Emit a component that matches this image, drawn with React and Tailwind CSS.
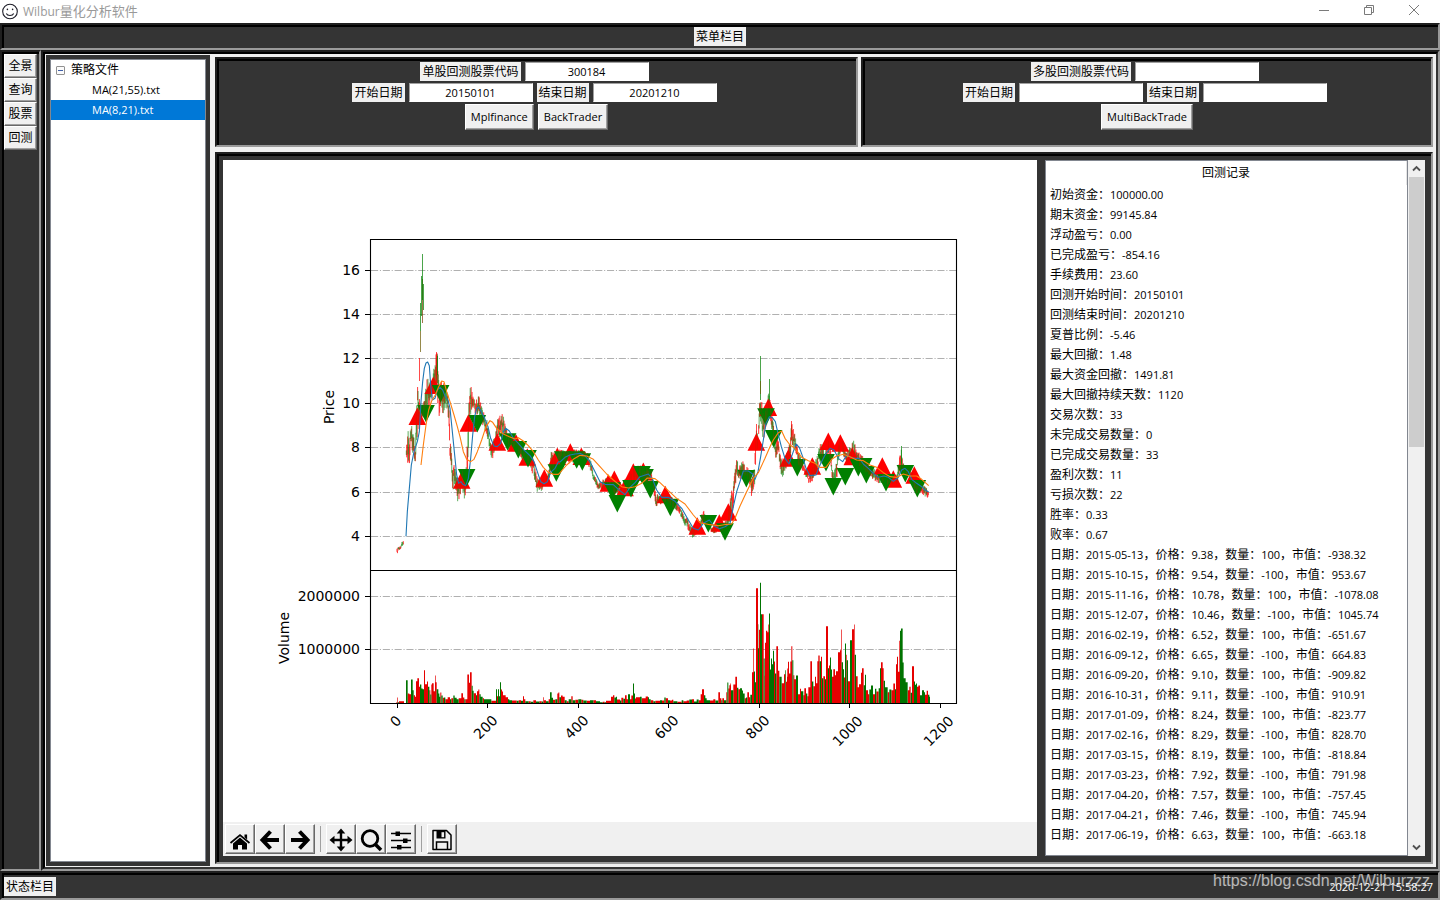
import React from "react";

/* ---------- shared styling ---------- */

const SUNKEN =
  "border-2 border-t-[#1f1f1f] border-l-[#1f1f1f] border-r-[#9a9a9a] border-b-[#9a9a9a] bg-[#343434] shadow-[inset_2px_2px_0_#000]";
const RAISED =
  "border border-t-white border-l-white border-r-[#696969] border-b-[#696969] bg-[#f0f0f0] shadow-[inset_-1px_-1px_0_#a0a0a0]";

/* Ideographs are set one pixel larger than the Latin text around them. */
function Mixed({ text }) {
  return text
    .split(/([\u3000-\u9fff\uff00-\uffef]+)/)
    .filter(Boolean)
    .map((part, i) => (
      <span key={i} className={/[\u3000-\uffef]/.test(part) ? "text-[12px]" : ""}>
        {part}
      </span>
    ));
}

/* ---------- title, menu and status bars ---------- */

function TitleBar() {
  return (
    <header className="flex h-[23px] items-center justify-between bg-white pl-[2px] pr-[19px]">
      <div className="flex items-center gap-[5px]">
        <svg width="16" height="18" viewBox="0 0 16 18" fill="none" stroke="#1d1d28">
          <circle cx="8" cy="8.5" r="7.3" strokeWidth="1.1" />
          <path d="M4.3 10.6c1.2 2.6 6.200 2.600 7.400 0" strokeWidth="1.1" />
          <circle cx="5.400" cy="6.400" r="0.800" fill="#1d1d28" stroke="none" />
          <circle cx="10.600" cy="6.400" r="0.800" fill="#1d1d28" stroke="none" />
        </svg>
        <h1 className="text-[12px] leading-[20px] text-[#999999]">
          Wilbur<span className="text-[13px]">量化分析软件</span>
        </h1>
      </div>
      <div className="flex h-full items-start gap-[31px] pt-[3px] text-[#7a7a7a]">
        <button aria-label="最小化" className="flex h-[14px] w-[14px] items-center justify-center">
          <svg width="12" height="12" viewBox="0 0 12 12" stroke="currentColor">
            <path d="M1 6.5h10" />
          </svg>
        </button>
        <button aria-label="还原" className="flex h-[14px] w-[14px] items-center justify-center">
          <svg width="12" height="12" viewBox="0 0 12 12" fill="none" stroke="currentColor">
            <path d="M1.500 3.500h7v7h-7zM3.500 3.500v-2h7v7h-2" />
          </svg>
        </button>
        <button aria-label="关闭" className="flex h-[14px] w-[14px] items-center justify-center">
          <svg width="12" height="12" viewBox="0 0 12 12" stroke="currentColor">
            <path d="M1 1l10 10M11 1L1 11" />
          </svg>
        </button>
      </div>
    </header>
  );
}

function Tag({ children, htmlFor }) {
  const cls = "block h-[19px] bg-[#f0f0f0] px-[2px] text-[12px] leading-[20px] text-black";
  return htmlFor ? (
    <label htmlFor={htmlFor} className={cls}>{children}</label>
  ) : (
    <span className={cls}>{children}</span>
  );
}

function StatusBar() {
  return (
    <footer className={`relative flex h-[29px] items-center justify-between px-[2px] pt-[2px] ${SUNKEN}`}>
      <Tag>状态栏目</Tag>
      <time className="pr-[3px] text-[11px] leading-[16px] text-white">2020-12-21 15:58:27</time>
      <span className="absolute right-[8px] -top-[1px] font-['Liberation_Sans',sans-serif] text-[16px] leading-[18px] text-white/65">
        https://blog.csdn.net/Wilburzzz
      </span>
    </footer>
  );
}

/* ---------- left column ---------- */

function SideNav() {
  return (
    <nav className={`w-[41px] py-[2px] pl-[2px] pr-[2px] ${SUNKEN}`}>
      {["全景", "查询", "股票", "回测"].map((name) => (
        <button key={name} className={`block h-[24px] w-full text-[12px] leading-[22px] text-black ${RAISED}`}>
          {name}
        </button>
      ))}
    </nav>
  );
}

function StrategyTree() {
  return (
    <aside className="flex w-[164px] bg-[#343434] p-[4px]">
      <ul className="flex-1 border border-[#828790] bg-white text-[11px] leading-[20px] text-black">
        <li>
          <div className="flex h-[20px] items-center gap-[6px] pl-[5px]">
            <svg width="9" height="9" viewBox="0 0 9 9">
              <rect x="0.500" y="0.500" width="8" height="8" rx="0.500" fill="#fbfbfb" stroke="#919191" />
              <path d="M2 4.500h5" stroke="#3f5fa8" />
            </svg>
            <span className="text-[12px] leading-[20px]">策略文件</span>
          </div>
          <ul>
            <li className="pl-[41px]">MA(21,55).txt</li>
            <li className="bg-[#0078d7] pl-[41px] text-white">MA(8,21).txt</li>
          </ul>
        </li>
      </ul>
    </aside>
  );
}

/* ---------- query panels ---------- */

function Field({ id, label, value }) {
  return (
    <div className="flex items-center gap-[4px]">
      <Tag htmlFor={id}>{label}</Tag>
      <input
        id={id}
        defaultValue={value}
        className="h-[19px] w-[124px] border border-t-[#a0a0a0] border-l-[#a0a0a0] border-r-white border-b-white bg-white text-center text-[11px] leading-[17px] text-black outline-none"
      />
    </div>
  );
}

function QueryPanel({ prefix, codeLabel, code, start, end, actions, className }) {
  return (
    <form
      onSubmit={(e) => e.preventDefault()}
      className={`flex h-[90px] flex-col items-center gap-[2px] pt-[3px] ${SUNKEN} ${className}`}
    >
      <div className="flex pr-[4px]">
        <Field id={`${prefix}-code`} label={codeLabel} value={code} />
      </div>
      <div className="flex gap-[4px] pr-[4px]">
        <Field id={`${prefix}-start`} label="开始日期" value={start} />
        <Field id={`${prefix}-end`} label="结束日期" value={end} />
      </div>
      <div className="flex gap-[4px]">
        {actions.map((a) => (
          <button key={a} type="button" className={`h-[26px] px-[5px] text-[11px] leading-[22px] text-black ${RAISED}`}>
            {a}
          </button>
        ))}
      </div>
    </form>
  );
}

/* ---------- chart data ---------- */

/* Series are recorded in thirds of a pixel from a section's origin. */
const at = (ox, oy, rows) => rows.map(([x, ...ys]) => [ox + x / 3, ...ys.map((y) => oy + y / 3)]);

const FAST_MA = [
  ...at(370, 235, [[108,904],[112,830],[118,760],[124,690],[132,650],[142,620],[148,590],[153,500],[158,440],[163,400],[168,384],[173,381],[178,392],[182,450],[187,495],[195,490],[202,465],[210,457],[218,465],[226,485],[234,495],[240,520],[247,590],[254,660],[260,720],[266,745],[273,740],[278,748],[287,752],[295,730],[302,670],[308,600],[314,545],[320,520],[326,516],[334,530],[344,550],[354,575],[362,610],[372,633],[382,635],[392,625],[400,590],[408,580],[418,588],[430,610],[445,625],[462,645],[480,662],[492,680],[502,710],[512,740],[522,746],[532,740],[542,712],[555,700],[565,680]]),
  ...at(560, 400, [[0,186],[15,172],[30,165],[45,162],[60,160],[75,168],[90,185],[105,215],[120,245],[135,253],[160,254],[175,268],[195,284],[210,262],[225,248],[240,230],[265,222],[278,238],[290,270],[305,292],[325,292],[345,304],[365,325],[385,360],[400,385],[415,390],[430,370],[448,360],[462,378],[478,386],[495,380],[510,370],[520,320],[530,275]]),
  ...at(740, 340, [[0,425],[10,393],[25,393],[38,402],[45,418],[54,395],[62,350],[70,300],[78,250],[88,230],[97,233],[106,245],[114,280],[124,320],[135,355],[147,372],[158,340],[168,312],[178,322],[188,350],[198,385],[210,407],[228,405],[240,375],[255,345],[270,325],[282,330],[295,355],[308,365],[320,345],[332,352],[345,355],[358,355],[370,372],[385,385],[400,400],[415,412],[432,408],[445,412],[460,424],[475,412],[485,390],[495,385],[505,395],[515,418],[530,430],[545,440],[555,450],[566,456]]),
];

const SLOW_MA = [
  ...at(370, 235, [[153,690],[160,630],[168,570],[176,525],[186,495],[196,480],[206,455],[215,438],[222,440],[230,470],[240,500],[252,540],[262,575],[270,605],[280,650],[290,673],[302,680],[312,673],[322,650],[335,615],[348,575],[360,557],[368,562],[380,580],[400,597],[418,605],[435,612],[445,608],[460,618],[475,632],[490,650],[505,675],[520,697],[535,712],[550,718],[565,718]]),
  ...at(560, 400, [[0,218],[20,195],[40,178],[60,166],[80,168],[100,178],[120,200],[140,222],[160,240],[185,260],[205,264],[225,260],[245,250],[262,234],[285,236],[300,248],[325,272],[350,295],[375,312],[400,345],[420,368],[450,374],[475,377],[500,373],[515,372],[525,355]]),
  ...at(740, 340, [[0,498],[20,455],[40,415],[55,398],[75,355],[90,320],[100,300],[115,278],[125,273],[135,295],[150,315],[165,325],[185,352],[205,362],[225,370],[240,382],[258,382],[275,358],[290,348],[310,343],[330,350],[350,360],[370,362],[390,375],[410,382],[430,398],[450,410],[470,412],[490,402],[510,408],[530,408],[545,418],[566,437]]),
];

/* x centre and base line of every marker */
const BUYS = [
  ...at(370, 235, [[142,570],[190,477],[275,761],[295,590],[382,647],[438,650],[472,692],[523,755],[562,690]]),
  ...at(560, 400, [[31,182],[64,195],[145,275],[163,264],[195,289],[220,242],[250,240],[316,310],[412,404],[478,395],[505,362]]),
  ...at(740, 340, [[49,332],[85,228],[145,380],[217,404],[265,330],[301,335],[337,376],[427,404],[460,443],[523,431]]),
];
const SELLS = [
  ...at(370, 235, [[168,510],[212,450],[290,702],[322,540],[413,595],[445,618],[474,645],[559,688]]),
  ...at(560, 400, [[8,154],[50,154],[67,160],[157,247],[172,285],[213,240],[246,198],[255,207],[271,243],[331,296],[445,345],[495,370],[559,210]]),
  ...at(740, 340, [[78,205],[101,270],[172,357],[258,342],[280,414],[316,384],[355,357],[371,354],[379,378],[438,402],[496,375],[532,420]]),
];

/* high and low of the traded range along x */
const RANGES = [
  at(370, 235, [[81,932,962],[84,935,950],[90,933,945],[96,920,938],[101,917,928]]),
  [
    ...at(370, 235, [[109,640,660],[113,580,688],[118,610,688],[124,560,640],[130,590,660],[136,620,685],[140,500,650],[143,450,580],[147,450,600],[150,500,560],[157,510,560],[165,480,540],[172,415,520],[180,450,520],[188,410,480],[195,385,450],[199,350,450],[203,360,540],[207,450,550],[212,430,520],[220,440,540],[228,440,520],[236,490,560],[240,600,670],[247,690,770],[255,690,750],[262,740,805],[268,720,790],[276,690,760],[286,740,808],[292,600,720],[297,480,600],[302,445,550],[308,470,520],[316,500,540],[326,480,540],[338,520,570],[350,550,600],[358,600,640],[366,630,680],[376,590,640],[384,545,620],[392,535,610],[397,533,600],[405,560,610],[415,600,640],[440,600,650],[460,640,680],[480,660,695],[490,670,730],[500,720,770],[508,735,772],[518,730,765],[530,720,750],[538,700,740],[543,640,700],[555,660,720],[565,635,700]]),
    ...at(560, 400, [[0,145,190],[30,150,190],[60,145,180],[85,160,195],[95,190,225],[105,230,255],[115,245,270],[135,235,270],[150,230,275],[170,250,290],[200,250,290],[215,205,250],[235,190,240],[260,200,250],[275,210,260],[283,250,290],[288,275,322],[300,285,315],[320,275,310],[345,295,330],[360,320,345],[375,350,380],[385,350,390],[396,385,415],[415,375,400],[430,330,370],[440,350,375],[460,385,402],[480,370,395],[500,360,390],[513,280,370],[520,250,320],[530,165,225]]),
    ...at(740, 340, [[0,375,425],[8,355,410],[18,380,420],[28,380,430],[36,400,480],[43,385,450],[49,255,340],[55,290,330],[58,180,260],[62,170,250],[66,180,290],[74,210,300],[82,160,260],[86,150,220],[95,190,270],[102,270,330],[108,280,360],[116,300,340],[122,340,410],[132,360,410],[142,330,380],[150,300,360],[154,245,320],[160,265,330],[168,280,340],[176,330,380],[190,370,395],[200,385,420],[210,390,440],[222,375,415],[235,330,390],[243,305,370],[255,330,370],[268,280,350],[276,370,420],[280,400,440],[290,360,420],[300,280,340],[308,300,345],[318,320,370],[330,320,370],[342,300,350],[350,330,370],[370,350,390],[390,380,410],[410,390,430],[430,400,430],[450,410,440],[470,400,435],[480,340,400],[484,320,390],[490,370,400],[505,385,415],[515,390,430],[530,420,460],[545,430,460],[555,440,470],[566,450,475]]),
  ],
];

/* isolated tall candles: x, high, low, colour */
const SPIKES = [
  [419.500, 358, 381, "#f00"], [420.500, 303, 331, "green"], [420.500, 331, 352, "#6b5a00"],
  [421.500, 276, 316, "green"], [422.500, 279, 323, "#7a3a00"], [422.500, 254, 300, "green"],
  [423.500, 284, 310, "green"], [436.500, 352, 385, "#f00"], [437.500, 356, 375, "green"],
  [760.500, 356, 400, "green"], [760.500, 381, 394, "#6b5a00"], [769.500, 379, 400, "green"],
  [756.500, 424, 450, "#f00"], [901.500, 446, 470, "green"], [791.500, 421, 440, "#f00"],
];

/* each volume step runs to the x of the next one; y is measured above a base of 430 */
const VOLUME = [
  [260, "409,426r 411,412r 413,426g 417,423r 432,429g 438,360g 443,400r 448,402r 453,358g 458,390g 461,405r 465,410r 468,363r 472,354r 477,380r 480,373g 484,385g 488,387g 492,330r 495,372r 501,364r 504,380g 508,390r 511,403g 514,373r 516,369r 521,393r 525,346r 527,366r 530,387g 535,400g 538,410g 541,397r 544,406g 548,413r 552,412g 556,417r 563,411r 570,417g 574,414r 580,406g 584,413g 590,417g 596,414r 604,399r 609,412r 613,417g 616,417r 622,343r 627,368r 630,336r 635,377g 638,392g 641,399r 648,405g 651,393r 655,388r 658,402g 662,410g 668,414r 672,417g 694,422r 708,387g 711,408r 714,387g 717,408g 720,366g 723,388r 726,394r 729,405r 737,411r 744,417g 748,420g 756,421r 770,422g 776,420r 783,422g 789,408r 792,417r 796,423g 806,423r 812,425g 820,420r 828,424g 838,423r 845,424g 850,411r 852,420r 858,423g 866,417r 870,396g 875,413g 879,419r 886,417g 892,400r 895,397r 898,411g 903,406r 908,410r 914,420g 920,423r 926,417g 934,408r 938,420g 946,419r 955,417g 964,419r 970,421g 980,422r 990,420g 1000,420r 1008,423g"],
  [600, "0,426g 8,425r 14,426g 18,422r 33,410r 39,405r 43,412g 48,410g 51,418r 60,421g 64,413r 70,416g 75,405r 80,417r 84,402g 90,417r 94,406r 99,370g 102,400g 105,415r 108,411r 120,410g 125,414r 137,409r 144,411g 147,417g 152,420r 160,423g 166,422r 180,420g 186,421r 193,412g 197,414r 204,420g 210,421r 216,419r 220,423g 232,425r 245,420g 250,423r 260,421r 268,418g 276,417r 282,424g 290,418g 296,420r 302,402r 306,387r 312,405g 316,414g 320,420g 330,421r 340,417r 346,421g 355,396r 360,414r 364,420g 367,414r 372,420g 379,396r 382,367g 385,385r 388,375r 391,370r 393,390g 400,373r 406,350r 411,383g 415,387r 420,384g 426,391g 429,400g 434,414r 438,412g 442,396r 447,411r 451,404g 456,336r 460,265r 462,334g 465,366g 468,84r 474,192g 475,264g 477,209r 480,68g 483,162g 486,162r 491,295g 494,347r 495,248r 498,212r 502,216r 505,193r 507,160g 510,328g 513,295g 516,312g 519,272g 522,304r 525,340g 529,258r 534,332r 538,350g 545,369r 552,342r 556,330g 558,365r 561,350r 562,325r 564,305r 567,340r 571,304r 574,258r 577,300g 580,345r 583,357r 588,346g 594,402r 600,386r 603,393g 610,405r 613,384r 618,400g 622,408r 625,381r 631,303r 636,364g 640,378r 645,350r 648,369r 652,303r 655,286r 659,303g 663,290r 666,354g 670,348r 675,357g 678,198r 684,324g 687,316r 690,292g 693,328g 696,350r 700,327r 705,345r 708,333r 714,276r 720,270r 723,208r 725,306g 729,327g 732,352r 735,250g 738,284r 740,300g 744,363r 750,240g 756,207r 762,193r 764,284g 768,348r 773,381r 777,372r 783,338r 786,324r 791,375g 795,344g 798,390r 804,402r 808,388g 813,376g 819,402r 825,386g 829,394r 836,384g 840,324g 843,306r 848,324r 851,362g 855,381g 863,396r 868,388g 874,390r 880,370r 885,387g 888,312r 891,290r 894,335r 898,242r 900,212g 903,205g 908,307g 911,354g 917,366g 923,390r 928,380r 932,398g 936,318r 942,364g 945,374g 948,370g 951,380r 955,376r 960,405g 966,390g 972,396g 975,404r 980,392r 984,404g 988,410g 990,430g"],
];

function volumePaths() {
  const bars = VOLUME.flatMap(([ox, s]) =>
    s.split(" ").map((t) => {
      const [x, rest] = t.split(",");
      return [ox + Number(x) / 3, (430 - parseInt(rest, 10)) / 3, rest.slice(-1)];
    })
  );
  const out = { r: "", g: "" };
  bars.slice(0, -1).forEach(([x, h, c], i) => {
    const w = bars[i + 1][0] - x;
    out[c] += `M${x.toFixed(2)} 703.5v${(-h).toFixed(2)}h${w.toFixed(2)}v${h.toFixed(2)}z`;
  });
  return out;
}

function candlePaths() {
  let seed = 11;
  const rnd = () => (seed = (seed * 16807) % 2147483647) / 2147483647;
  const out = { red: "", green: "" };
  RANGES.forEach((pts) => {
    let k = 0;
    for (let x = pts[0][0]; x <= pts[pts.length - 1][0]; x += 0.45) {
      while (k < pts.length - 2 && pts[k + 1][0] < x) k++;
      const [x0, t0, b0] = pts[k];
      const [x1, t1, b1] = pts[k + 1];
      const f = Math.min(1, Math.max(0, (x - x0) / (x1 - x0)));
      const top = t0 + (t1 - t0) * f;
      const span = b0 + (b1 - b0) * f - top;
      const len = span * (0.3 + 0.45 * rnd());
      const y = top + (span - len) * rnd();
      out[rnd() < 0.5 ? "red" : "green"] += `M${x.toFixed(2)} ${y.toFixed(2)}v${len.toFixed(2)}`;
    }
  });
  return out;
}

const volume = volumePaths();
const candles = candlePaths();
const line = (pts) => pts.map(([x, y]) => `${x.toFixed(2)},${y.toFixed(2)}`).join(" ");

const PRICE_TICKS = [[16, 270.5], [14, 314.5], [12, 358.5], [10, 403.5], [8, 447.5], [6, 492.5], [4, 536.5]];
const VOLUME_TICKS = [[2000000, 596.5], [1000000, 649.5]];
const X_TICKS = [[0, 397.5, 721], [200, 487.5, 727], [400, 578.5, 727], [600, 668.5, 727], [800, 759.5, 727], [1000, 849.5, 731], [1200, 940.5, 731]];

function Chart() {
  return (
    <svg
      viewBox="0 0 814 662"
      className="min-h-0 w-full flex-1 bg-white font-['DejaVu_Sans',sans-serif] text-[14px]"
      role="img"
      aria-label="Price / Volume"
    >
      <g transform="translate(-223 -160)">
        {[...PRICE_TICKS, ...VOLUME_TICKS].map(([v, y]) => (
          <g key={v}>
            <path d={`M371 ${y}H956`} stroke="#b0b0b0" strokeWidth="1.1" strokeDasharray="7.1 1.8 1.1 1.8" />
            <path d={`M365 ${y}H370`} stroke="#000" />
            <text x="360" y={y + 4.5} textAnchor="end">{v}</text>
          </g>
        ))}
        <path d={volume.r} fill="#e60000" />
        <path d={volume.g} fill="#007300" />
        <path d={candles.red} stroke="#f00" strokeWidth="0.9" opacity="0.8" />
        <path d={candles.green} stroke="#008000" strokeWidth="0.7" opacity="0.8" />
        {BUYS.map(([x, y], i) => (
          <path key={`b${i}`} d={`M${x} ${y - 17.5}l8.800 17.500h-17.600z`} fill="#f00" />
        ))}
        {SELLS.map(([x, y], i) => (
          <path key={`s${i}`} d={`M${x} ${y + 17.5}l8.800 -17.500h-17.600z`} fill="#008000" />
        ))}
        <path d={candles.red} stroke="#f00" strokeWidth="0.5" opacity="0.3" />
        <path d={candles.green} stroke="#008000" strokeWidth="0.5" opacity="0.2" />
        {SPIKES.map(([x, y0, y1, c], i) => (
          <path key={i} d={`M${x} ${y0}V${y1}`} stroke={c} opacity="0.7" />
        ))}
        <polyline points={line(FAST_MA)} fill="none" stroke="#1f77b4" strokeWidth="1.1" strokeLinejoin="round" />
        <polyline points={line(SLOW_MA)} fill="none" stroke="#ff7f0e" strokeWidth="1.1" strokeLinejoin="round" />
        <path d="M370.500 239.500H956.500V703.500H370.500zM370.500 570.500H956.500" fill="none" stroke="#000" strokeWidth="1.1" />
        {X_TICKS.map(([v, x, y]) => (
          <g key={v}>
            <path d={`M${x} 703V708`} stroke="#000" />
            <text transform={`translate(${x - 2} ${y}) rotate(-45)`} y="5" textAnchor="middle">{v}</text>
          </g>
        ))}
        <text transform="translate(334 407) rotate(-90)" textAnchor="middle">Price</text>
        <text transform="translate(289 638) rotate(-90)" textAnchor="middle">Volume</text>
      </g>
    </svg>
  );
}

/* ---------- chart toolbar ---------- */

const ICONS = {
  主页: (
    <g>
      <path d="M12 9.500l7 6v6h-5v-4.500h-4v4.500H5v-6z" fill="#000" />
      <path d="M2.500 15L12 7l9.500 8" fill="none" stroke="#000" strokeWidth="1.700" />
      <path d="M16.500 6.500h2.600v5l-2.600-2.200z" fill="#000" />
    </g>
  ),
  后退: <path d="M12.500 3.500L4.500 12l8 8.500M5 12h16" fill="none" stroke="#000" strokeWidth="4" />,
  前进: <path d="M11.500 3.500l8 8.500-8 8.500M19 12H3" fill="none" stroke="#000" strokeWidth="4" />,
  平移: (
    <g>
      <path d="M12 3v18M3 12h18" stroke="#000" strokeWidth="2.400" />
      <path d="M12 0.500l4.300 5h-8.600zM12 23.500l4.300-5h-8.600zM0.500 12l5-4.300v8.600zM23.500 12l-5-4.300v8.600z" fill="#000" />
    </g>
  ),
  缩放: (
    <g fill="none" stroke="#000">
      <circle cx="11" cy="10.500" r="7.800" strokeWidth="2.800" />
      <path d="M16.500 16.500l5.500 5.500" strokeWidth="3.600" />
    </g>
  ),
  配置: (
    <g>
      <path d="M2 5.500h20M2 12.500h20M2 19.500h20" stroke="#000" strokeWidth="1.500" />
      <path d="M6.500 3.500h4.500v4.500H6.500zM14 10.500h4.500v4.500H14zM8 17h4.500v4.500H8z" fill="#000" />
    </g>
  ),
  保存: (
    <g>
      <path d="M3 2.500h13.500l4.500 4.500v14.500H3z" fill="none" stroke="#000" strokeWidth="1.500" strokeLinejoin="round" />
      <path d="M6.500 3h9v7.500h-9z" fill="#000" />
      <path d="M11.500 4.200h2.600v5h-2.600z" fill="#f0f0f0" />
      <path d="M6.500 21v-7h11V21" fill="none" stroke="#000" strokeWidth="1.500" />
    </g>
  ),
};

function ToolButton({ name }) {
  return (
    <button aria-label={name} className={`flex h-[30px] w-[30px] items-center justify-center pt-px ${RAISED}`}>
      <svg width="24" height="24" viewBox="0 0 24 24">{ICONS[name]}</svg>
    </button>
  );
}

function Toolbar() {
  const groups = [["主页", "后退", "前进"], ["平移", "缩放", "配置"], ["保存"]];
  return (
    <div className="flex h-[34px] items-center bg-[#f0f0f0] px-[2px]">
      {groups.map((g, i) => (
        <React.Fragment key={i}>
          {i > 0 && <span className="mx-[5px] h-[26px] w-px bg-[#a0a0a0]" />}
          {g.map((n) => (
            <ToolButton key={n} name={n} />
          ))}
        </React.Fragment>
      ))}
    </div>
  );
}

/* ---------- back-test log ---------- */

const SUMMARY = [
  "初始资金：100000.00", "期末资金：99145.84", "浮动盈亏：0.00", "已完成盈亏：-854.16", "手续费用：23.60",
  "回测开始时间：20150101", "回测结束时间：20201210", "夏普比例：-5.46", "最大回撤：1.48", "最大资金回撤：1491.81",
  "最大回撤持续天数：1120", "交易次数：33", "未完成交易数量：0", "已完成交易数量：33", "盈利次数：11", "亏损次数：22",
  "胜率：0.33", "败率：0.67",
];

const TRADES = [
  ["2015-05-13", "9.38", "100", "-938.32"], ["2015-10-15", "9.54", "-100", "953.67"],
  ["2015-11-16", "10.78", "100", "-1078.08"], ["2015-12-07", "10.46", "-100", "1045.74"],
  ["2016-02-19", "6.52", "100", "-651.67"], ["2016-09-12", "6.65", "-100", "664.83"],
  ["2016-09-20", "9.10", "100", "-909.82"], ["2016-10-31", "9.11", "-100", "910.91"],
  ["2017-01-09", "8.24", "100", "-823.77"], ["2017-02-16", "8.29", "-100", "828.70"],
  ["2017-03-15", "8.19", "100", "-818.84"], ["2017-03-23", "7.92", "-100", "791.98"],
  ["2017-04-20", "7.57", "100", "-757.45"], ["2017-04-21", "7.46", "-100", "745.94"],
  ["2017-06-19", "6.63", "100", "-663.18"],
];

const LOG = [...SUMMARY, ...TRADES.map(([d, p, n, v]) => `日期：${d}，价格：${p}，数量：${n}，市值：${v}`)];

function Arrow({ label, d }) {
  return (
    <button aria-label={label} className="flex h-[17px] w-full items-center justify-center">
      <svg width="9" height="9" viewBox="0 0 9 9" fill="none" stroke="#505050" strokeWidth="1.800">
        <path d={d} />
      </svg>
    </button>
  );
}

function LogPanel() {
  return (
    <section className="flex w-[380px]">
      <div className="flex-1 overflow-hidden border border-[#828790] bg-white">
        <table className="w-full border-collapse text-left text-[11px] text-black">
          <thead>
            <tr className="h-[24px]">
              <th className="border-r border-[#e5e5e5] p-0 text-center text-[12px] font-normal leading-[24px]">回测记录</th>
            </tr>
          </thead>
          <tbody>
            {LOG.map((row) => (
              <tr key={row} className="h-[20px]">
                <td className="whitespace-nowrap py-0 pl-[4px] pr-0 leading-[20px]">
                  <Mixed text={row} />
                </td>
              </tr>
            ))}
          </tbody>
        </table>
      </div>
      <div className="flex w-[17px] flex-col bg-[#f0f0f0]">
        <Arrow label="向上滚动" d="M1 6.500l3.500-3.500 3.500 3.500" />
        <div className="flex-1 px-px">
          <div className="h-[270px] bg-[#cdcdcd]" />
        </div>
        <Arrow label="向下滚动" d="M1 2.500l3.500 3.500 3.500-3.500" />
      </div>
    </section>
  );
}

/* ---------- page ---------- */

export default function App() {
  return (
    <div className="flex min-h-screen flex-col bg-[#f0f0f0] font-['Open_Sans','Noto_Sans_CJK_SC',sans-serif]">
      <TitleBar />
      <div className={`flex h-[27px] justify-center pt-[2px] ${SUNKEN}`}>
        <Tag>菜单栏目</Tag>
      </div>
      <div className="flex flex-1">
        <SideNav />
        <main className="flex flex-1 border-2 border-t-[#1f1f1f] border-l-[#1f1f1f] border-r-[#9a9a9a] border-b-[#9a9a9a]">
          <div className="flex flex-1 gap-[5px] border-2 border-t-black border-l-black border-r-[#343434] border-b-[#343434] pb-px pl-px pr-[3px] pt-px">
            <StrategyTree />
            <div className="flex flex-1 flex-col gap-[5px] pb-[2px] pt-[2px]">
              <div className="flex gap-[3px]">
                <QueryPanel
                  prefix="single"
                  className="flex-1"
                  codeLabel="单股回测股票代码"
                  code="300184"
                  start="20150101"
                  end="20201210"
                  actions={["Mplfinance", "BackTrader"]}
                />
                <QueryPanel
                  prefix="multi"
                  className="w-[572px]"
                  codeLabel="多股回测股票代码"
                  code=""
                  start=""
                  end=""
                  actions={["MultiBackTrade"]}
                />
              </div>
              <div className={`flex flex-1 gap-[8px] p-[6px] ${SUNKEN}`}>
                <div className="flex flex-1 flex-col">
                  <Chart />
                  <Toolbar />
                </div>
                <LogPanel />
              </div>
            </div>
          </div>
        </main>
      </div>
      <StatusBar />
    </div>
  );
}
